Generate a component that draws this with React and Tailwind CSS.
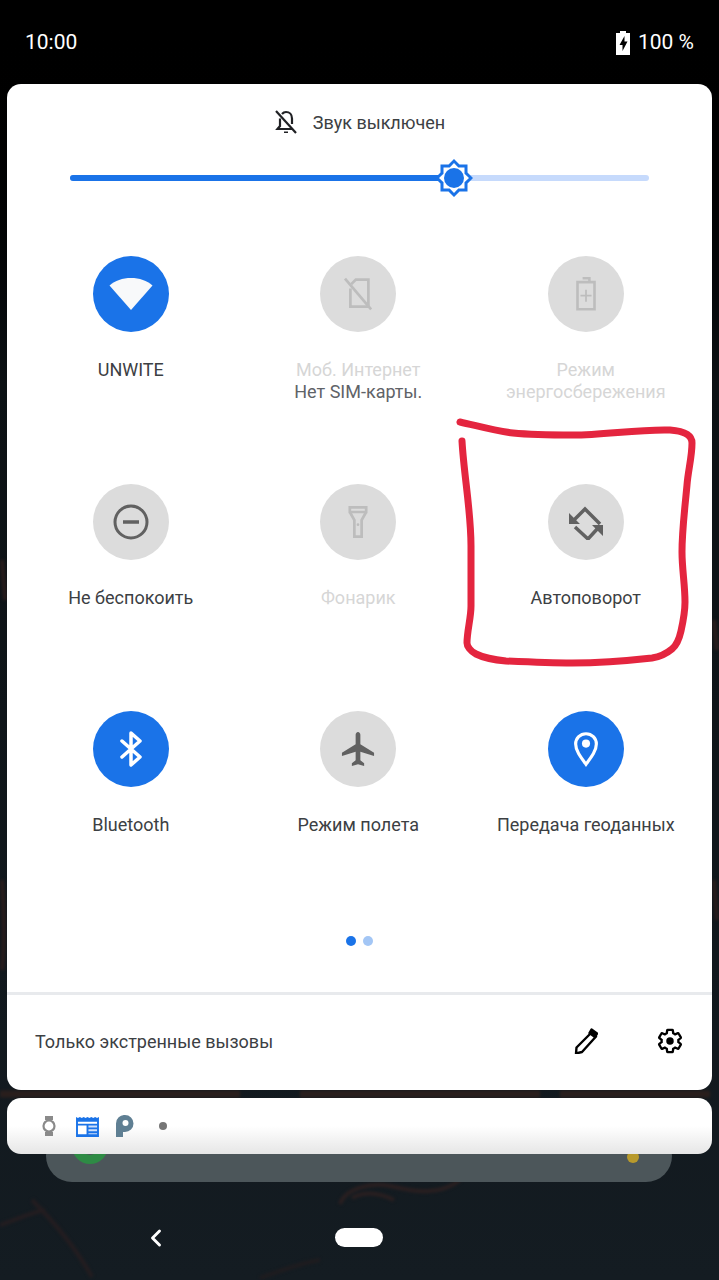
import { ChevronLeft } from 'lucide-react'

const blue = 'bg-[#1a73e8]'
const grey = 'bg-[#dcdcdc]'

const WifiIcon = () => (
  <svg width="44" height="34" viewBox="0 0 44 34" fill="#f8f9fa"><path d="M22 33 0.5 8.5C6 3.5 13.500 1 22 1s16 2.500 21.500 7.500z" /></svg>
)
const NoSimIcon = () => (
  <svg width="31" height="36" viewBox="0 0 34 40" fill="none" stroke="#bdbdbd" strokeWidth="3">
    <path d="M8 14v20h20V4H14l-5 5" />
    <path d="M2 3l29 34" />
  </svg>
)
const BatteryIcon = () => (
  <svg width="22" height="34" viewBox="0 0 24 40" fill="none" stroke="#bdbdbd" strokeWidth="3">
    <path d="M2 6h20v32H2z" /><path d="M8 1.500h8v4" />
    <path d="M12 15v14M5.500 22h13" strokeWidth="2" />
  </svg>
)
const DndIcon = () => (
  <svg width="36" height="36" viewBox="0 0 36 36" fill="none" stroke="#616161" strokeWidth="3">
    <circle cx="18" cy="18" r="16" /><path d="M10 18h16" strokeWidth="3.500" />
  </svg>
)
const TorchIcon = () => (
  <svg width="20" height="36" viewBox="0 0 22 36" fill="none" stroke="#bdbdbd" strokeWidth="3">
    <path d="M2 2h18v5H2zM2 7l5 9v18h8V16l5-9" /><circle cx="11" cy="21" r="1.500" fill="#bdbdbd" stroke="none" />
  </svg>
)
const RotateIcon = () => (
  <svg width="36" height="36" viewBox="0 0 36 36" fill="none" stroke="#616161" strokeWidth="3.500">
    <path d="M6 16 17 5l15 15" />
    <path d="M7 23l13 12 11-12" />
    <path d="M1 9v11h11zM35 32V21H24z" fill="#616161" stroke="none" />
  </svg>
)
const BluetoothIcon = () => (
  <svg width="22" height="36" viewBox="0 0 22 36" fill="none" stroke="#fff" strokeWidth="3.500" strokeLinecap="round" strokeLinejoin="round">
    <path d="M2 10l18 16-9 8V2l9 8L2 26" />
  </svg>
)
const PlaneIcon = () => (
  <svg width="34" height="36" viewBox="0 0 36 36" fill="#616161">
    <path d="M20.500 3c0-1.500-1-3-2.500-3s-2.500 1.500-2.500 3v10L1 22v3.500l14.500-4.500v9L11.500 33v3l6.500-1.800L24.500 36v-3l-4-3v-9L35 25.500V22l-14.500-9z" />
  </svg>
)
const PinIcon = () => (
  <svg width="26" height="36" viewBox="0 0 28 40" fill="none">
    <path d="M14 37C8 29 2.500 22 2.500 14.500a11.500 11.500 0 0 1 23 0C25.500 22 20 29 14 37z" stroke="#fff" strokeWidth="3.500" />
    <circle cx="14" cy="14" r="4.500" fill="#fff" />
  </svg>
)

const tiles = [
  { icon: <WifiIcon />, bg: blue, label: 'UNWITE' },
  { icon: <NoSimIcon />, bg: grey, label: 'Моб. Интернет', muted: true, sub: 'Нет SIM-карты.' },
  { icon: <BatteryIcon />, bg: grey, label: 'Режим энергосбережения', muted: true },
  { icon: <DndIcon />, bg: grey, label: 'Не беспокоить' },
  { icon: <TorchIcon />, bg: grey, label: 'Фонарик', muted: true },
  { icon: <RotateIcon />, bg: grey, label: 'Автоповорот' },
  { icon: <BluetoothIcon />, bg: blue, label: 'Bluetooth' },
  { icon: <PlaneIcon />, bg: grey, label: 'Режим полета' },
  { icon: <PinIcon />, bg: blue, label: 'Передача геоданных' },
]

function Tile({ icon, bg, label, muted, sub }) {
  return (
    <div className="h-[227.5px] flex flex-col items-center">
      <div className={`w-[76px] h-[76px] rounded-full flex items-center justify-center ${bg}`}>{icon}</div>
      <div className={`mt-[27px] w-[205px] text-center text-[18px] leading-[22px] ${muted ? 'text-[#d6d6d6]' : 'text-[#3c4043]'}`}>{label}</div>
      {sub && <div className="text-center text-[18px] leading-[22px] text-[#5f6368]">{sub}</div>}
    </div>
  )
}

export default function App() {
  return (
    <div className="relative w-[719px] h-[1280px] overflow-hidden bg-gradient-to-b from-black via-[#0c1114] via-30% to-[#141c22] font-['Roboto',sans-serif]">
      {/* wallpaper scribbles */}
      <svg className="absolute inset-0 blur-[1.5px]" width="719" height="1280" fill="none" strokeWidth="4">
        <path d="M32 1200c25 25 45 50 60 77" stroke="#241d20" />
        <path d="M340 1204c5-15 30-22 50-18 25 6 50 10 70-6M352 1198c15-8 30-4 42 2" stroke="#2a1f20" />
        <path d="M0 1225c15-5 30-12 45-15" stroke="#241d20" />
        <path d="M260 1278c15-5 40-15 60-18" stroke="#1f1c1f" />
        <path d="M0 1094h240M300 1094h240M560 1094h150" stroke="#2a1f1d" strokeWidth="7" />
        <path d="M2 880c2 30 3 60 0 90M714 880l3 40M2 560l3 40M714 620l3 30" stroke="#2a1d1c" />
      </svg>

      <div className="relative flex items-center justify-between h-[84px] pl-[25px] pr-[25px] pt-[1px] text-white text-[21px]">
        <span>10:00</span>
        <span className="flex items-center gap-[8px]">
          <svg width="14" height="24" viewBox="0 0 14 24">
            <path fill="#fff" d="M4 0h6v2h4v22H0V2h4z" />
            <path fill="#000" d="M8.500 5 3.500 14h3v6l5-9.500h-3z" />
          </svg>
          100 %
        </span>
      </div>

      <div className="relative mx-[7px] h-[1006px] bg-white rounded-[14px] flex flex-col">
        <div className="flex items-center justify-center gap-[15px] h-[76px] text-[18px] text-[#3c4043]">
          <svg width="24" height="26" viewBox="0 0 24 26" fill="none" stroke="#202124" strokeWidth="2.200">
            <path d="M6 9.500V17l-2.500 3h15M8 5c1-1.200 2.500-2 4-2 3.500 0 6 2.500 6 6.500V15" />
            <path d="M2 2l20 22" />
            <path d="M10 22.500h4v1.500h-4z" fill="#202124" stroke="none" />
          </svg>
          Звук выключен
        </div>

        <div className="relative mx-[63px] h-[6px] mt-[15px] rounded-full bg-[#c6dafc]">
          <div className="h-full w-[66%] rounded-full bg-[#1a73e8]" />
          <svg className="absolute left-[364px] top-[-17px]" width="40" height="40" viewBox="0 0 40 40">
            <path fill="#1a73e8" d="M20 1l5.500 5.500H33.500V14.500L39 20l-5.500 5.500V33.500H25.500L20 39l-5.500-5.500H6.500V25.500L1 20l5.500-5.500V6.500H14.500z" />
            <path fill="#fff" d="M20 5l4.300 4.500H30.500V15.700L35 20l-4.500 4.300V30.500H24.300L20 35l-4.300-4.500H9.500V24.300L5 20l4.500-4.300V9.500H15.700z" />
            <circle cx="20" cy="20" r="10" fill="#1a73e8" />
          </svg>
        </div>

        <div className="grid grid-cols-3 ml-[10px] w-[682.5px] mt-[75px]">
          {tiles.map((t) => <Tile key={t.label} {...t} />)}
        </div>

        <div className="flex justify-center gap-[7px] mt-[-3px]">
          <div className="w-[10px] h-[10px] rounded-full bg-[#1a73e8]" />
          <div className="w-[10px] h-[10px] rounded-full bg-[#a3c6f5]" />
        </div>

        <div className="mt-[46px] border-t-[3px] border-[#e8eaed] flex-1 flex items-center justify-between pl-[28px] pr-[28px]">
          <span className="text-[18px] text-[#3c4043] mt-[-2px]">Только экстренные вызовы</span>
          <span className="flex items-center gap-[58px] mt-[-2px]">
            <svg width="24" height="26" viewBox="0 0 24 26" fill="none" stroke="#000" strokeWidth="2.400" strokeLinejoin="round">
              <path d="M17 5 22 8.500 8 24l-6 1.500.5-6z" />
              <path d="M17.500 1.500 23 5.500 21 9 15.500 5z" fill="#000" />
            </svg>
            <svg width="28" height="28" viewBox="0 0 24 24" fill="none" stroke="#000" strokeWidth="2">
              <path d="M19.140 12.940c.04-.3.06-.61.06-.94 0-.32-.02-.64-.07-.94l2.030-1.580c.18-.14.23-.41.12-.61l-1.920-3.320c-.12-.22-.37-.29-.59-.22l-2.390.96c-.5-.38-1.030-.7-1.620-.94l-.36-2.540c-.04-.24-.24-.41-.48-.41h-3.840c-.24 0-.43.17-.47.41l-.36 2.540c-.59.24-1.130.57-1.620.94l-2.390-.96c-.22-.08-.47 0-.59.22L2.740 8.870c-.12.21-.08.47.12.61l2.030 1.580c-.05.3-.09.63-.09.94s.02.64.07.94l-2.030 1.580c-.18.14-.23.41-.12.61l1.920 3.320c.12.22.37.29.59.22l2.390-.96c.5.38 1.030.7 1.620.94l.36 2.540c.05.24.24.41.48.41h3.840c.24 0 .44-.17.47-.41l.36-2.540c.59-.24 1.130-.56 1.620-.94l2.390.96c.22.08.47 0 .59-.22l1.920-3.320c.12-.22.07-.47-.12-.61z" />
              <circle cx="12" cy="12" r="3.200" fill="#000" stroke="none" />
            </svg>
          </span>
        </div>
      </div>

      <div className="relative mx-[7px] mt-[8px] z-10 h-[56px] rounded-[14px] bg-gradient-to-b from-white via-white to-[#e6e6e6] flex items-center pl-[35px]">
        <svg width="14" height="20" viewBox="0 0 14 20" fill="none">
          <path fill="#8a8a8a" d="M3 0h8v4H3zM3 16h8v4H3z" />
          <circle cx="7" cy="10" r="5.500" stroke="#8a8a8a" strokeWidth="2.200" fill="#fff" />
        </svg>
        <svg className="ml-[20px]" width="23" height="21" viewBox="0 0 24 22">
          <path fill="#1a73e8" d="M0 1l2 1 2-1 2 1 2-1 2 1 2-1 2 1 2-1 2 1 2-1 2 1 2-1v21H0z" />
          <path fill="#fff" d="M2 6h20v2H2zM2 10h9v9H2z" />
          <path fill="#cfe0fa" d="M13 10h9v2h-9zM13 14h9v2h-9zM13 18h9v1h-9z" />
        </svg>
        <svg className="ml-[17px]" width="18" height="22" viewBox="0 0 18 22">
          <path fill="#5f7f93" d="M9 0a8.500 8.500 0 0 1 0 17H7v5H0V8.500A8.500 8.500 0 0 1 9 0z" />
          <circle cx="9.500" cy="8" r="3" fill="#fff" />
        </svg>
        <div className="ml-[25px] w-[8px] h-[8px] rounded-full bg-[#757575]" />
      </div>

      {/* search pill behind notification */}
      <div className="absolute left-[46px] top-[1130px] w-[626px] h-[52px] rounded-[27px] bg-[#4c565a] overflow-hidden">
        <div className="absolute left-[26px] top-[-2px] w-[36px] h-[36px] rounded-full bg-[#2e8b45]">
          <div className="absolute left-[9px] top-[9px] w-[18px] h-[18px] rounded-full bg-[#4c565a]" />
        </div>
        <div className="absolute left-[581px] top-[21px] w-[12px] h-[12px] rounded-full bg-[#b89a2c]" />
      </div>

      <ChevronLeft className="absolute left-[142px] top-[1224px]" size={28} color="#fff" strokeWidth={2.500} />
      <div className="absolute left-[335px] top-[1228px] w-[48px] h-[19px] rounded-full bg-white" />

      {/* red marker annotation */}
      <svg className="absolute inset-0 pointer-events-none" width="719" height="1280" fill="none" stroke="#e4253f" strokeWidth="7" strokeLinecap="round" strokeLinejoin="round">
        <path d="M460 422c18 4 35 9 53 11 20 2 40 2 60 2 32 0 65-6 97-5 14 1 22 5 22 13 0 14-4 28-5 42-2 22-5 45-5 67 0 17 3 33 3 50 0 10-2 20-4 29-2 9-4 14-9 18-6 5-13 8-20 9-27 3-53 5-80 5-22 0-44-1-66-2-11-1-22-3-30-7-6-3-9-8-9-11 0-12 4-25 4-37 0-20 0-40 0-60 0-35-7-70-9-105" />
      </svg>
    </div>
  )
}
